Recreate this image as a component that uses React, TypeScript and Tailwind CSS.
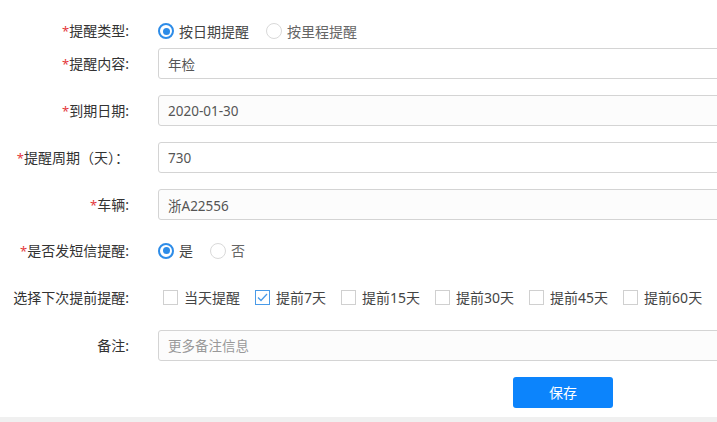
import React, { useState } from 'react';

const font = { fontFamily: '"Noto Sans", "Noto Sans CJK SC", sans-serif' };

const Label: React.FC<{ text: string; required?: boolean }> = ({ text, required }) => (
  <div className="w-[130px] shrink-0 whitespace-nowrap text-right text-[14px] text-[#333] pr-[1px]">
    {required && <span className="text-[#e4393c] text-[13px]">*</span>}
    {text}
  </div>
);

const Radio: React.FC<{ checked: boolean; label: string; onClick: () => void }> = ({ checked, label, onClick }) => (
  <label className="flex items-center shrink-0 whitespace-nowrap mr-[17px] cursor-pointer" onClick={onClick}>
    <span
      className={`w-[16px] h-[16px] rounded-full border flex items-center justify-center ${
        checked ? 'border-[#2d8ce8] border-[2px]' : 'border-[#d9d9d9]'
      }`}
    >
      {checked && <span className="w-[7px] h-[7px] rounded-full bg-[#2d8ce8]" />}
    </span>
    <span className={`ml-[5px] text-[14px] ${checked ? 'text-[#444]' : 'text-[#666]'}`}>{label}</span>
  </label>
);

const Checkbox: React.FC<{ checked: boolean; label: string; onClick: () => void }> = ({ checked, label, onClick }) => (
  <label className="flex items-center shrink-0 whitespace-nowrap mr-[15px] cursor-pointer" onClick={onClick}>
    <span
      className={`w-[15px] h-[15px] border bg-white flex items-center justify-center ${
        checked ? 'border-[#4a9be8]' : 'border-[#d0d0d0]'
      }`}
    >
      {checked && (
        <svg width="11" height="9" viewBox="0 0 11 9">
          <path d="M1 4.5 L4 7.5 L10 1" fill="none" stroke="#4a9be8" strokeWidth="1.3" />
        </svg>
      )}
    </span>
    <span className="ml-[6px] text-[14px] text-[#444]">{label}</span>
  </label>
);

const Input: React.FC<{ value?: string; placeholder?: string; grey?: boolean }> = ({ value, placeholder, grey }) => (
  <input
    readOnly
    value={value}
    placeholder={placeholder}
    className={`w-[620px] h-[31px] shrink-0 border border-[#d4d4d4] rounded-[3px] px-[9px] text-[13.5px] text-[#555] placeholder:text-[#999] outline-none ${
      grey ? 'bg-[#fcfcfc]' : 'bg-white'
    }`}
  />
);

const App: React.FC = () => {
  const [type, setType] = useState<'date' | 'mile'>('date');
  const [sms, setSms] = useState(true);
  const [ahead, setAhead] = useState<string[]>(['提前7天']);
  const options = ['当天提醒', '提前7天', '提前15天', '提前30天', '提前45天', '提前60天'];

  const toggle = (o: string) =>
    setAhead((prev) => (prev.includes(o) ? prev.filter((x) => x !== o) : [...prev, o]));

  return (
    <div className="w-[717px] h-[422px] overflow-hidden bg-white flex flex-col" style={font}>
      <div className="pt-[16px]">
        <div className="flex items-center h-[30px]">
          <Label text="提醒类型:" required />
          <div className="flex items-center ml-[28px]">
            <Radio checked={type === 'date'} label="按日期提醒" onClick={() => setType('date')} />
            <Radio checked={type === 'mile'} label="按里程提醒" onClick={() => setType('mile')} />
          </div>
        </div>

        <div className="flex items-center mt-[2px]">
          <Label text="提醒内容:" required />
          <div className="ml-[28px]">
            <Input value="年检" />
          </div>
        </div>

        <div className="flex items-center mt-[16px]">
          <Label text="到期日期:" required />
          <div className="ml-[28px]">
            <Input value="2020-01-30" grey />
          </div>
        </div>

        <div className="flex items-center mt-[16px]">
          <Label text="提醒周期（天）：" required />
          <div className="ml-[28px]">
            <Input value="730" />
          </div>
        </div>

        <div className="flex items-center mt-[16px]">
          <Label text="车辆:" required />
          <div className="ml-[28px]">
            <Input value="浙A22556" grey />
          </div>
        </div>

        <div className="flex items-center h-[31px] mt-[15px]">
          <Label text="是否发短信提醒:" required />
          <div className="flex items-center ml-[28px]">
            <Radio checked={sms} label="是" onClick={() => setSms(true)} />
            <Radio checked={!sms} label="否" onClick={() => setSms(false)} />
          </div>
        </div>

        <div className="flex items-center h-[31px] mt-[16px]">
          <Label text="选择下次提前提醒:" />
          <div className="flex items-center ml-[33px]">
            {options.map((o) => (
              <Checkbox key={o} checked={ahead.includes(o)} label={o} onClick={() => toggle(o)} />
            ))}
          </div>
        </div>

        <div className="flex items-center mt-[17px]">
          <Label text="备注:" />
          <div className="ml-[28px]">
            <Input placeholder="更多备注信息" grey />
          </div>
        </div>

        <div className="pl-[513px] mt-[16px]">
          <button className="w-[100px] h-[31px] rounded-[3px] bg-[#0c84fc] text-white text-[14px]">保存</button>
        </div>
      </div>
      <div className="mt-[9px] flex-1 bg-[#f0f0f0]" />
    </div>
  );
};

export default App;
